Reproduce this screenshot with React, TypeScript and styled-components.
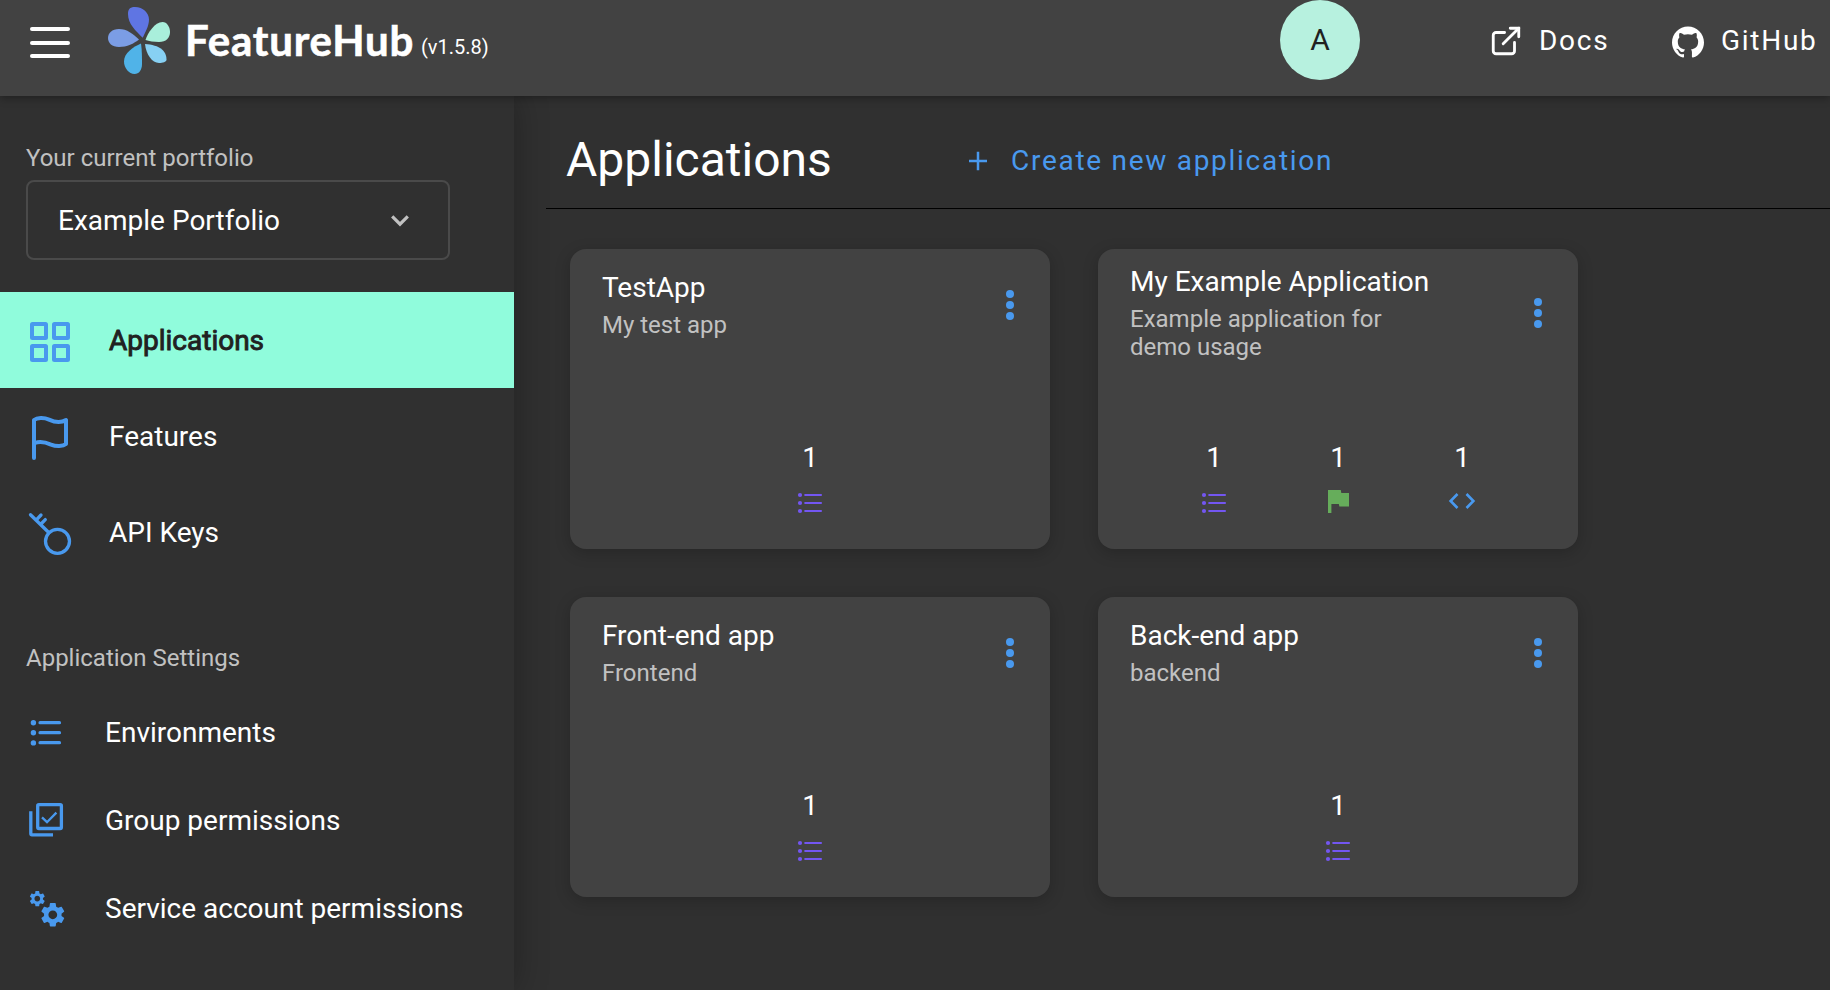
import React from "react";
import styled, { createGlobalStyle } from "styled-components";

const BLUE = "#4999ee";
const PURPLE = "#7356f1";
const GREEN = "#66ad5b";

const GlobalStyle = createGlobalStyle`
  * { box-sizing: border-box; }
  body {
    margin: 0;
    background: #303030;
    color: #fff;
    font-family: Roboto, "Liberation Sans", sans-serif;
    font-size: 28px;
    line-height: 32px;
    overflow: hidden;
  }
  button { font: inherit; color: inherit; background: none; border: 0; padding: 0; }
  svg { display: block; flex: none; }
`;

const Page = styled.div`
  height: 990px;
  display: flex;
  flex-direction: column;
`;

const TopBar = styled.header`
  height: 96px;
  flex: none;
  display: flex;
  align-items: flex-start;
  background: #424242;
  box-shadow: 0 2px 8px rgba(0, 0, 0, 0.35);
  z-index: 3;
`;

const MenuButton = styled.button`
  margin: 27px 0 0 30px;
  height: 31px;
  width: 40px;
  display: flex;
  flex-direction: column;
  justify-content: space-between;
`;

const MenuLine = styled.span`
  height: 4px;
  border-radius: 2px;
  background: #fff;
`;

const Brand = styled.div`
  display: flex;
  align-items: flex-start;
  margin: 6px 0 0 38px;
  width: 440px;
`;

const BrandName = styled.span`
  margin: 10px 0 0 15px;
  width: 236px;
  white-space: nowrap;
  font: 700 42px/48px Lato, sans-serif;
  letter-spacing: 0.8px;
  -webkit-text-stroke: 0.6px #fff;
`;

const Version = styled.span`
  margin-top: 25px;
  font-size: 20px;
  line-height: 32px;
  white-space: nowrap;
`;

const TopActions = styled.nav`
  margin-left: auto;
  width: 550px;
  height: 80px;
  display: flex;
  align-items: center;
`;

const Avatar = styled.div`
  width: 80px;
  height: 80px;
  border-radius: 50%;
  background: #b7f1df;
  color: #212121;
  display: flex;
  align-items: center;
  justify-content: center;
  font-size: 30px;
  margin-right: 129px;
`;

const TopLink = styled.a<{ $gap: number; $width: number }>`
  display: flex;
  align-items: center;
  gap: ${(p) => p.$gap}px;
  width: ${(p) => p.$width}px;
  padding-top: 2px;
  white-space: nowrap;
  letter-spacing: 1.72px;
`;

const Body = styled.div`
  flex: 1;
  display: flex;
  min-height: 0;
`;

const Sidebar = styled.aside`
  width: 514px;
  flex: none;
  background: #303030;
  box-shadow: 0 0 32px rgba(0, 0, 0, 0.3);
  z-index: 2;
`;

const SectionLabel = styled.div<{ $top: number }>`
  padding: ${(p) => p.$top}px 26px 0;
  font-size: 24px;
  line-height: 28px;
  color: #c1c1c1;
`;

const Select = styled.button`
  display: flex;
  align-items: center;
  justify-content: space-between;
  width: 424px;
  height: 80px;
  margin: 8px 0 32px 26px;
  padding: 1px 39px 0 30px;
  border: 2px solid #4a4a4a;
  border-radius: 8px;
`;

const ItemLabel = styled.span`
  padding-top: 2px;
`;

const NavItem = styled.a<{ $active?: boolean }>`
  display: flex;
  align-items: center;
  height: 96px;
  padding-left: 26px;
  gap: 35px;
  background: ${(p) => (p.$active ? "#90fcdc" : "transparent")};
  color: ${(p) => (p.$active ? "#212121" : "#fff")};
  -webkit-text-stroke: ${(p) => (p.$active ? "0.9px #212121" : "0")};
`;

const SettingsItem = styled.a`
  display: flex;
  align-items: center;
  height: 88px;
  padding-left: 26px;
  gap: 39px;
`;

const SettingsList = styled.div`
  padding-top: 16px;
`;

const Main = styled.main`
  flex: 1;
  min-width: 0;
  padding-left: 32px;
`;

const Heading = styled.div`
  height: 113px;
  display: flex;
  align-items: center;
  padding: 16px 0 0 20px;
  border-bottom: 1px solid #000;
`;

const Title = styled.h1`
  margin: 0;
  font-weight: 400;
  font-size: 48px;
  line-height: 56px;
  width: 403px;
`;

const CreateButton = styled.button`
  display: flex;
  align-items: center;
  gap: 24px;
  padding-top: 2px;
  color: ${BLUE};
  letter-spacing: 1.72px;
`;

const CardGrid = styled.section`
  display: grid;
  grid-template-columns: 480px 480px;
  gap: 48px;
  padding: 40px 0 0 24px;
`;

const Card = styled.article`
  height: 300px;
  border-radius: 16px;
  background: #424242;
  box-shadow: 0 4px 16px rgba(0, 0, 0, 0.2);
  padding: 0 32px 32px;
  display: flex;
  flex-direction: column;
  justify-content: space-between;
`;

const CardHeader = styled.div<{ $tall: boolean }>`
  display: flex;
  align-items: center;
  justify-content: space-between;
  height: ${(p) => (p.$tall ? 128 : 112)}px;
`;

const CardText = styled.div<{ $tall: boolean }>`
  width: 280px;
  margin-top: 1px;
`;

const CardName = styled.div`
  white-space: nowrap;
`;

const CardNote = styled.div`
  margin-top: 7px;
  font-size: 24px;
  line-height: 28px;
  color: #c1c1c1;
`;

const Dots = styled.div`
  width: 8px;
  display: flex;
  flex-direction: column;
  gap: 3px;
  margin-right: 4px;
`;

const Dot = styled.span`
  height: 8px;
  border-radius: 50%;
  background: ${BLUE};
`;

const Stats = styled.div`
  display: flex;
  justify-content: center;
`;

const Stat = styled.div`
  width: 124px;
  display: flex;
  flex-direction: column;
  align-items: center;
  gap: 11px;
`;

const Logo = () => (
  <svg width="62" height="68" viewBox="108 6 62 68">
    <path fill="#5f75e3" d="M142.7 37.8C136 31 128 24 128 14C128 8 131 7 135 7C143 7 149 13 149 19.5C149 26 145 33 142.7 37.8Z" />
    <path fill="#7b9de5" d="M139 39.5C134 43.5 127 47 119 47C112 47 108 43 108 38C108 33 112 29 119 29C127 29 133 34 139 39.5Z" />
    <path fill="#a9efdb" d="M145.5 40C147.5 33 155 22 162.5 22C167 22 170 27 170 32C170 38 166 42 159 42C154 42 149 41 145.5 40Z" />
    <path fill="#87d0f3" d="M145 44C152 44.5 158 46 162 49.5C166 53 166.5 57 166.5 60C166 62 163 63 159 63C152 63 146 54 145 44Z" />
    <path fill="#50b3e8" d="M141 43.5C142 50 142 58 142 64C142 70 139 74 134.5 74C129 74 124 68 124 61.5C124 53 133 47 141 43.5Z" />
  </svg>
);

const ExternalIcon = () => (
  <svg width="34" height="34" viewBox="0 0 24 24" fill="none" stroke="#fff" strokeWidth="2" strokeLinecap="round" strokeLinejoin="round">
    <path d="M18 13v6a2 2 0 0 1-2 2H5a2 2 0 0 1-2-2V8a2 2 0 0 1 2-2h6M10 14L21 3" />
    <path strokeLinejoin="miter" d="M15 3h6v6" />
  </svg>
);

const GitHubIcon = () => (
  <svg width="32" height="34" viewBox="0 -1.5 24 25.5" fill="#fff">
    <path d="M12 .297c-6.63 0-12 5.373-12 12 0 5.303 3.438 9.8 8.205 11.385.6.113.82-.258.82-.577 0-.285-.01-1.04-.015-2.04-3.338.724-4.042-1.61-4.042-1.61C4.422 18.07 3.633 17.7 3.633 17.7c-1.087-.744.084-.729.084-.729 1.205.084 1.838 1.236 1.838 1.236 1.07 1.835 2.809 1.305 3.495.998.108-.776.417-1.305.76-1.605-2.665-.3-5.466-1.332-5.466-5.93 0-1.31.465-2.38 1.235-3.22-.135-.303-.54-1.523.105-3.176 0 0 1.005-.322 3.3 1.23.96-.267 1.98-.399 3-.405 1.02.006 2.04.138 3 .405 2.28-1.552 3.285-1.23 3.285-1.23.645 1.653.24 2.873.12 3.176.765.84 1.23 1.91 1.23 3.22 0 4.61-2.805 5.625-5.475 5.92.42.36.81 1.096.81 2.22 0 1.606-.015 2.896-.015 3.286 0 .315.21.69.825.57C20.565 22.092 24 17.592 24 12.297c0-6.627-5.373-12-12-12" />
  </svg>
);

const ChevronIcon = () => (
  <svg width="18" height="12" viewBox="0 0 18 12" fill="none" stroke="#c1c1c1" strokeWidth="3.2">
    <path d="M1.2 1.4L9 9.2L16.8 1.4" />
  </svg>
);

const GridIcon = () => (
  <svg width="48" height="48" viewBox="26 316 48 48" fill="none" stroke={BLUE} strokeWidth="4">
    <rect x="32" y="324" width="14" height="14" rx=".5" />
    <rect x="54" y="324" width="14" height="14" rx=".5" />
    <rect x="32" y="346" width="14" height="14" rx=".5" />
    <rect x="54" y="346" width="14" height="14" rx=".5" />
  </svg>
);

const FlagIcon = () => (
  <svg width="48" height="48" viewBox="26 412 48 48" fill="none" stroke={BLUE} strokeWidth="4" strokeLinecap="round" strokeLinejoin="round">
    <path d="M34 458V420C37 417.6 44 417.4 49 419.6C55 422.4 61 423 66 420V444C63 446.6 56 446.6 51 444.6C45 442 40 441 35 443" />
  </svg>
);

const KeyIcon = () => (
  <svg width="48" height="48" viewBox="26 508 48 48" fill="none" stroke={BLUE} strokeWidth="3.3" strokeLinecap="round">
    <circle cx="57.5" cy="541.3" r="12" />
    <path d="M30.5 514.7L49 532.7M36.6 519.6L41 515M41 524L45.3 519.6" />
  </svg>
);

const SidebarListIcon = () => (
  <svg width="40" height="40" viewBox="26 712 40 40" fill={BLUE} stroke={BLUE} strokeLinecap="round">
    <g stroke="none">
      <circle cx="33.4" cy="722.7" r="2.7" />
      <circle cx="33.4" cy="732.8" r="2.7" />
      <circle cx="33.4" cy="742.9" r="2.7" />
    </g>
    <path strokeWidth="3.2" d="M40 722.7H59.5M40 732.7H59.5M40 742.7H59.5" />
  </svg>
);

const GroupIcon = () => (
  <svg width="40" height="40" viewBox="26 800 40 40" fill="none" stroke={BLUE} strokeWidth="3.3">
    <rect x="37.7" y="804.7" width="23.7" height="23.8" rx="1.2" />
    <path d="M30.8 811.3V833.6Q30.8 834.8 32 834.8H53" />
    <path strokeWidth="2.3" d="M42 817.4L47 822.2L56.4 812.6" />
  </svg>
);

const GEAR =
  "M19.14 12.94c.04-.3.06-.61.06-.94 0-.32-.02-.64-.07-.94l2.03-1.58c.18-.14.23-.41.12-.61l-1.92-3.32c-.12-.22-.37-.29-.59-.22l-2.39.96c-.5-.38-1.03-.7-1.62-.94l-.36-2.54c-.04-.24-.24-.41-.48-.41h-3.84c-.24 0-.43.17-.47.41l-.36 2.54c-.59.24-1.13.57-1.62.94l-2.39-.96c-.22-.08-.47 0-.59.22L2.74 8.87c-.12.21-.08.47.12.61l2.03 1.58c-.05.3-.09.63-.09.94s.02.64.07.94l-2.03 1.58c-.18.14-.23.41-.12.61l1.92 3.32c.12.22.37.29.59.22l2.39-.96c.5.38 1.03.7 1.62.94l.36 2.54c.05.24.24.41.48.41h3.84c.24 0 .44-.17.47-.41l.36-2.54c.59-.24 1.13-.56 1.62-.94l2.39.96c.22.08.47 0 .59-.22l1.92-3.32c.12-.22.07-.47-.12-.61l-2.01-1.58zM12 15.6c-1.98 0-3.6-1.62-3.6-3.6s1.62-3.6 3.6-3.6 3.6 1.62 3.6 3.6-1.62 3.6-3.6 3.6z";

const GearsIcon = () => (
  <svg width="40" height="40" viewBox="26 888 40 40" fill={BLUE}>
    <path d={GEAR} transform="translate(37.3 898.7) scale(.79) translate(-12 -12)" />
    <path d={GEAR} transform="translate(52.8 914.8) scale(1.22) translate(-12 -12)" />
  </svg>
);

const ListIcon = () => (
  <svg width="32" height="32" viewBox="0 0 32 32" fill={PURPLE} stroke={PURPLE} strokeLinecap="round">
    <g stroke="none">
      <circle cx="6" cy="10" r="2.1" />
      <circle cx="6" cy="18" r="2.1" />
      <circle cx="6" cy="26" r="2.1" />
    </g>
    <path strokeWidth="2.1" d="M11.2 10H27M11.2 18H27M11.2 26H27" />
  </svg>
);

const SolidFlagIcon = () => (
  <svg width="32" height="32" viewBox="0 0 32 32" fill={GREEN}>
    <path d="M6 5H18.8L19.3 8H27V21.6H17.4L16.8 19H9.4V28H6Z" />
  </svg>
);

const CodeIcon = () => (
  <svg width="32" height="32" viewBox="0 0 32 32" fill="none" stroke={BLUE} strokeWidth="2.6">
    <path d="M11.5 9L4.6 16L11.5 23M20.5 9L27.4 16L20.5 23" />
  </svg>
);

const PlusIcon = () => (
  <svg width="18" height="20" viewBox="0 0 18 20" fill="none" stroke={BLUE} strokeWidth="2.5">
    <path d="M9 .8V19.2M0 10H18" />
  </svg>
);

const statIcons = { list: ListIcon, flag: SolidFlagIcon, code: CodeIcon };

type AppInfo = {
  name: string;
  note: string;
  tall?: boolean;
  stats: { kind: keyof typeof statIcons; count: number }[];
};

const apps: AppInfo[] = [
  { name: "TestApp", note: "My test app", stats: [{ kind: "list", count: 1 }] },
  {
    name: "My Example Application",
    note: "Example application for demo usage",
    tall: true,
    stats: [
      { kind: "list", count: 1 },
      { kind: "flag", count: 1 },
      { kind: "code", count: 1 },
    ],
  },
  { name: "Front-end app", note: "Frontend", stats: [{ kind: "list", count: 1 }] },
  { name: "Back-end app", note: "backend", stats: [{ kind: "list", count: 1 }] },
];

const navItems = [
  { label: "Applications", Icon: GridIcon, active: true },
  { label: "Features", Icon: FlagIcon, active: false },
  { label: "API Keys", Icon: KeyIcon, active: false },
];

const settingsItems = [
  { label: "Environments", Icon: SidebarListIcon },
  { label: "Group permissions", Icon: GroupIcon },
  { label: "Service account permissions", Icon: GearsIcon },
];

const AppCard = ({ app }: { app: AppInfo }) => (
  <Card>
    <CardHeader $tall={!!app.tall}>
      <CardText $tall={!!app.tall}>
        <CardName>{app.name}</CardName>
        <CardNote>{app.note}</CardNote>
      </CardText>
      <Dots>
        <Dot />
        <Dot />
        <Dot />
      </Dots>
    </CardHeader>
    <Stats>
      {app.stats.map(({ kind, count }) => {
        const Icon = statIcons[kind];
        return (
          <Stat key={kind}>
            <span>{count}</span>
            <Icon />
          </Stat>
        );
      })}
    </Stats>
  </Card>
);

export default function App() {
  return (
    <Page>
      <GlobalStyle />
      <TopBar>
        <MenuButton aria-label="Menu">
          <MenuLine />
          <MenuLine />
          <MenuLine />
        </MenuButton>
        <Brand>
          <Logo />
          <BrandName>FeatureHub</BrandName>
          <Version>(v1.5.8)</Version>
        </Brand>
        <TopActions>
          <Avatar>A</Avatar>
          <TopLink $gap={16} $width={183}>
            <ExternalIcon />
            Docs
          </TopLink>
          <TopLink $gap={17} $width={150}>
            <GitHubIcon />
            GitHub
          </TopLink>
        </TopActions>
      </TopBar>
      <Body>
        <Sidebar>
          <SectionLabel $top={48}>Your current portfolio</SectionLabel>
          <Select>
            <span>Example Portfolio</span>
            <ChevronIcon />
          </Select>
          {navItems.map(({ label, Icon, active }) => (
            <NavItem key={label} $active={active}>
              <Icon />
              <ItemLabel>{label}</ItemLabel>
            </NavItem>
          ))}
          <SectionLabel $top={64}>Application Settings</SectionLabel>
          <SettingsList>
            {settingsItems.map(({ label, Icon }) => (
              <SettingsItem key={label}>
                <Icon />
                <ItemLabel>{label}</ItemLabel>
              </SettingsItem>
            ))}
          </SettingsList>
        </Sidebar>
        <Main>
          <Heading>
            <Title>Applications</Title>
            <CreateButton>
              <PlusIcon />
              Create new application
            </CreateButton>
          </Heading>
          <CardGrid>
            {apps.map((app) => (
              <AppCard key={app.name} app={app} />
            ))}
          </CardGrid>
        </Main>
      </Body>
    </Page>
  );
}
